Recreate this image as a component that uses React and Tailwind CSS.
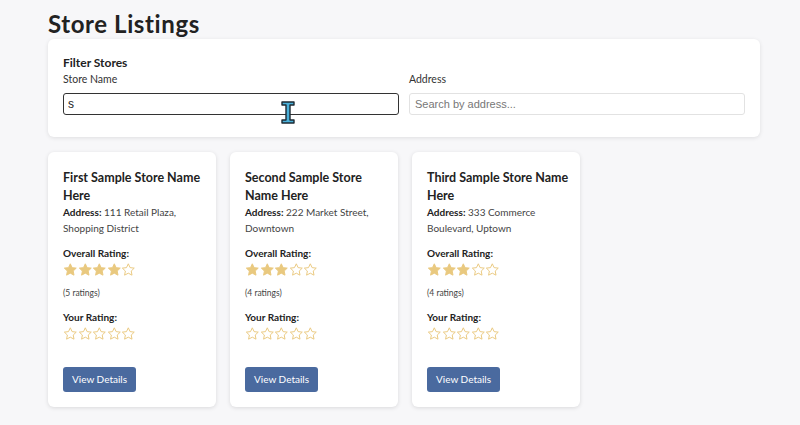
const stores = [
  { name: 'First Sample Store Name Here', address: '111 Retail Plaza, Shopping District', rating: 4, count: 5 },
  { name: 'Second Sample Store Name Here', address: '222 Market Street, Downtown', rating: 3, count: 4 },
  { name: 'Third Sample Store Name Here', address: '333 Commerce Boulevard, Uptown', rating: 3, count: 4 },
]

function Star({ filled }) {
  return (
    <svg width="14.6" height="16" viewBox="0 0 24 24">
      <path
        d="M12 1.8l3 6.3 6.8.8-5 4.8 1.3 6.8L12 17.2l-6.1 3.3 1.3-6.8-5-4.8 6.8-.8z"
        fill={filled ? '#e9c97f' : 'none'}
        stroke="#e9c97f"
        strokeWidth="1.6"
        strokeLinejoin="round"
      />
    </svg>
  )
}

function Stars({ value }) {
  return (
    <div className="flex">
      {[1, 2, 3, 4, 5].map((i) => (
        <Star key={i} filled={i <= value} />
      ))}
    </div>
  )
}

function StoreCard({ store }) {
  return (
    <div className="w-[168px] bg-white rounded-md shadow-[0_1px_4px_rgba(0,0,0,0.12)] pl-[15px] pr-[11px] pt-[17px] pb-[15px] text-[#222]">
      <h3 className="text-[12.5px] font-bold leading-[18px]">{store.name}</h3>
      <p className="text-[10px] leading-[16px] text-[#444] pr-[4px] -mt-[1px]">
        <span className="font-bold text-[#222]">Address:</span> {store.address}
      </p>
      <p className="text-[10px] font-bold mt-[9px] leading-[16px]">Overall Rating:</p>
      <div className="mt-[1px]">
        <Stars value={store.rating} />
      </div>
      <p className="text-[8.5px] text-[#444] mt-[9px] leading-[12px]">({store.count} ratings)</p>
      <p className="text-[10px] font-bold mt-[10px] leading-[16px]">Your Rating:</p>
      <div className="mt-[1px]">
        <Stars value={0} />
      </div>
      <button className="mt-[25px] h-[25px] px-[9px] rounded-[3px] bg-[#4a6a9f] text-white text-[10px]">
        View Details
      </button>
    </div>
  )
}

export default function App() {
  return (
    <div className="relative min-h-[425px] bg-[#f7f7f9] px-[48px] pt-[9px] font-['Lato',sans-serif]">
      <h1 className="text-[24px] font-bold tracking-[0.6px] text-[#222] leading-[30px]">Store Listings</h1>
      <div className="w-[712px] bg-white rounded-md shadow-[0_1px_4px_rgba(0,0,0,0.1)] px-[15px] pt-[16px] pb-[22px]">
        <h2 className="text-[12px] font-bold text-[#222] leading-[16px]">Filter Stores</h2>
        <div className="flex gap-[10px] mt-[1px]">
          <div className="flex-1">
            <label className="block text-[10.5px] text-[#333] leading-[14px] mb-[4px]">Store Name</label>
            <input
              defaultValue="s"
              className="w-full h-[22px] border border-[#333] rounded-[3px] px-[4px] text-[12px] text-[#222] font-['Liberation_Sans',sans-serif] outline-none"
            />
          </div>
          <div className="flex-1">
            <label className="block text-[10.5px] text-[#333] leading-[14px] mb-[4px]">Address</label>
            <input
              placeholder="Search by address..."
              className="w-full h-[22px] border border-[#e2e2e2] rounded-[3px] px-[5px] text-[11px] font-['Liberation_Sans',sans-serif] placeholder:text-[#777] outline-none"
            />
          </div>
        </div>
      </div>
      <div className="flex gap-[14px] mt-[15px]">
        {stores.map((s) => (
          <StoreCard key={s.name} store={s} />
        ))}
      </div>
      <svg className="absolute left-[281px] top-[101px]" width="14" height="23" viewBox="0 0 14 23">
        <path
          d="M1 1h12v3H9v15h4v3H1v-3h4V4H1z"
          fill="#4ab0d9"
          stroke="#1d2a33"
          strokeWidth="1.4"
          strokeLinejoin="round"
        />
      </svg>
    </div>
  )
}
